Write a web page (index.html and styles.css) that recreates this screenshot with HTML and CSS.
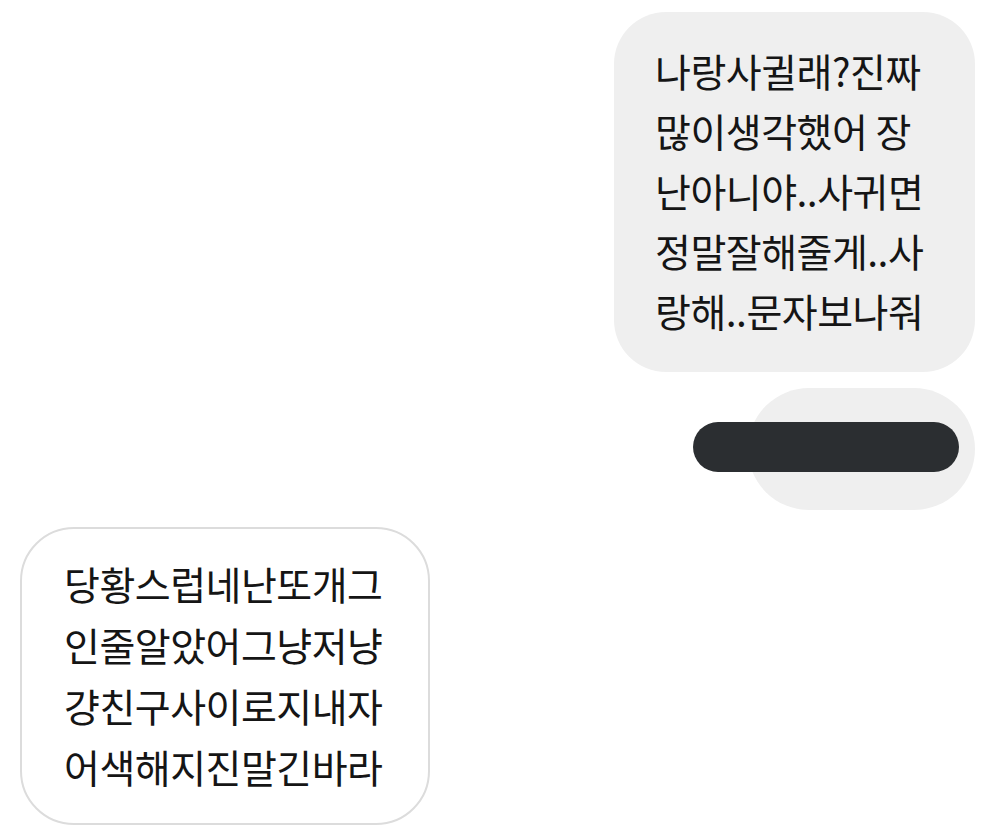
FILE: index.html
```html
<!DOCTYPE html>
<html>
<head>
    <meta charset="UTF-8">
    <meta name="viewport" content="width=device-width, initial-scale=1.0">
    <title>Chat</title>
    <link rel="stylesheet" href="styles.css">
</head>
<body>
    <div class="chat">
        <div class="bubble sent">
            나랑사귈래?진짜<br>
            많이생각했어 장<br>
            난아니야..사귀면<br>
            정말잘해줄게..사<br>
            랑해..문자보나줘
        </div>

        <div class="bubble sent short">
            <span class="redact"></span>
        </div>

        <div class="bubble received">
            당황스럽네난또개그<br>
            인줄알았어그냥저냥<br>
            걍친구사이로지내자<br>
            어색해지진말긴바라
        </div>
    </div>
</body>
</html>
```

FILE: styles.css
```css
body { margin: 0; background: #fff; font-family: "Noto Sans CJK KR", "Noto Sans", sans-serif; color: #151515; }
.chat { display: flex; flex-direction: column; width: 1000px; height: 840px; padding-top: 12px; box-sizing: border-box; }
.bubble { font-size: 39px; white-space: nowrap; box-sizing: border-box; }
.sent { align-self: flex-end; margin-right: 25px; background: #efefef; border-radius: 52px; width: 361px; padding: 28px 10px 32px 41px; line-height: 60px; letter-spacing: -0.5px; }
.short { position: relative; width: 227px; height: 122px; padding: 0; margin-top: 16px; border-radius: 61px; }
.redact { position: absolute; left: -55px; top: 34px; width: 266px; height: 50px; border-radius: 25px; background: #2b2e31; }
.received { align-self: flex-start; margin-left: 20px; margin-top: 17px; width: 410px; height: 298px; border: 2px solid #dcdcdc; border-radius: 54px; padding: 24px 10px 26px 42px; line-height: 61px; letter-spacing: -0.5px; }
```
